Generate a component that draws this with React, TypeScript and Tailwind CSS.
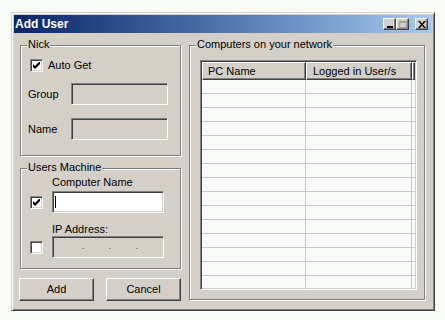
import React from "react";

const raised =
  "border border-t-white border-l-white border-r-[#404040] border-b-[#404040] shadow-[inset_-1px_-1px_0_#808080]";
const sunken =
  "border border-t-[#808080] border-l-[#808080] border-r-white border-b-white shadow-[inset_1px_1px_0_#404040,inset_-1px_-1px_0_#d4d0c8]";
const groupBox = "relative border border-[#808080] shadow-[inset_1px_1px_0_#fff,1px_1px_0_#fff]";

function CheckBox({ checked }: { checked?: boolean }) {
  return (
    <span className={`flex h-[13px] w-[13px] shrink-0 items-center justify-center bg-white ${sunken}`}>
      {checked && (
        <svg width="7" height="7" viewBox="0 0 7 7">
          <path d="M0 2 L0 5 L2 7 L7 2 L7 -1 L2 4 Z" fill="#000" />
        </svg>
      )}
    </span>
  );
}

function GroupLabel({ children }: { children: React.ReactNode }) {
  return (
    <span className="absolute -top-[8px] left-[6px] bg-[#d4d0c8] px-[1px] leading-[13px]">{children}</span>
  );
}

function TitleButton({ children, className = "" }: { children: React.ReactNode; className?: string }) {
  return (
    <div className={`flex h-[12px] w-[13px] items-center justify-center bg-[#d4d0c8] ${raised} ${className}`}>
      {children}
    </div>
  );
}

export default function App() {
  const rows = Array.from({ length: 15 });
  return (
    <div className="min-h-screen bg-[#f9fbf9] pl-[11px] pt-[12px] font-['Liberation_Sans',Arial,sans-serif] text-[11px] text-black">
      <div className="flex h-[299px] w-[424px] flex-col border border-t-[#d4d0c8] border-l-[#d4d0c8] border-r-[#404040] border-b-[#404040] bg-[#d4d0c8] p-[2px] shadow-[inset_1px_1px_0_#fff,inset_-1px_-1px_0_#808080]">
        {/* title bar */}
        <div className="flex h-[18px] items-center justify-between bg-linear-to-r from-[#0a246a] to-[#a6caf0] pl-[1px] pr-[4px]">
          <span className="text-[12px] font-bold leading-none text-white">Add User</span>
          <div className="flex items-center">
            <TitleButton>
              <span className="mt-[5px] h-[2px] w-[6px] bg-black" />
            </TitleButton>
            <TitleButton>
              <span className="h-[7px] w-[8px] border border-t-2 border-[#a0a0a0]" />
            </TitleButton>
            <TitleButton className="ml-[6px]">
              <svg width="8" height="7" viewBox="0 0 8 7">
                <path d="M0 0 L2 0 L4 2.5 L6 0 L8 0 L5 3.5 L8 7 L6 7 L4 4.5 L2 7 L0 7 L3 3.5 Z" fill="#000" />
              </svg>
            </TitleButton>
          </div>
        </div>

        {/* body */}
        <div className="flex pl-[5px] pt-[12px]">
          <div className="flex w-[162px] flex-col">
            <div className={`${groupBox} ml-[1px] h-[111px] w-[161px]`}>
              <GroupLabel>Nick</GroupLabel>
              <div className="flex flex-col pl-[7px] pt-[13px]">
                <label className="ml-[2px] flex h-[13px] items-center gap-[5px]">
                  <CheckBox checked />
                  <span className="leading-[13px]">Auto Get</span>
                </label>
                <div className="mt-[11px] flex h-[22px] items-center">
                  <span className="w-[43px]">Group</span>
                  <div className={`h-[22px] w-[97px] bg-[#d4d0c8] ${sunken}`} />
                </div>
                <div className="mt-[13px] flex h-[22px] items-center">
                  <span className="w-[43px]">Name</span>
                  <div className={`h-[22px] w-[97px] bg-[#d4d0c8] ${sunken}`} />
                </div>
              </div>
            </div>

            <div className={`${groupBox} ml-[1px] mt-[12px] h-[101px] w-[161px]`}>
              <GroupLabel>Users Machine</GroupLabel>
              <div className="grid grid-cols-[22px_112px] pl-[9px] pt-[7px]">
                <span />
                <span className="leading-[13px]">Computer Name</span>
                <div className="col-span-2 mt-[2px] flex h-[22px] items-center">
                  <span className="w-[22px]">
                    <CheckBox checked />
                  </span>
                  <div className={`flex h-[22px] w-[112px] items-center bg-white pl-[2px] ${sunken}`}>
                    <span className="h-[12px] w-[1px] bg-black" />
                  </div>
                </div>
                <span />
                <span className="mt-[10px] leading-[13px]">IP Address:</span>
                <div className="col-span-2 flex h-[22px] items-center">
                  <span className="w-[22px]">
                    <CheckBox />
                  </span>
                  <div className={`flex h-[22px] w-[112px] items-center bg-[#d4d0c8] pl-[29px] ${sunken}`}>
                    <span className="mt-[2px] h-[1px] w-[2px] bg-[#8a8a8a]" />
                    <span className="ml-[25px] mt-[2px] h-[1px] w-[2px] bg-[#8a8a8a]" />
                    <span className="ml-[25px] mt-[2px] h-[1px] w-[2px] bg-[#8a8a8a]" />
                  </div>
                </div>
              </div>
            </div>

            <div className="mt-[9px] flex">
              <button className={`flex h-[23px] w-[75px] items-center justify-center bg-[#d4d0c8] ${raised}`}>Add</button>
              <button className={`ml-[12px] flex h-[23px] w-[75px] items-center justify-center bg-[#d4d0c8] ${raised}`}>
                Cancel
              </button>
            </div>
          </div>

          <div className={`${groupBox} ml-[8px] h-[255px] w-[236px]`}>
            <GroupLabel>Computers on your network</GroupLabel>
            <div className={`ml-[10px] mt-[14px] flex h-[230px] w-[217px] flex-col overflow-hidden bg-[#f9fbf9] p-[1px] ${sunken}`}>
              <div className="flex h-[18px] shrink-0 bg-[#d4d0c8]">
                <div className={`flex w-[104px] items-center pl-[5px] ${raised}`}>PC Name</div>
                <div className={`flex w-[106px] items-center pl-[6px] ${raised}`}>Logged in User/s</div>
                <div className={`flex-1 ${raised}`} />
              </div>
              {rows.map((_, i) => (
                <div key={i} className="flex h-[14px] shrink-0 border-b border-[#c6c6c6]">
                  <div className="w-[104px] border-r border-[#c6c6c6]" />
                  <div className="w-[106px] border-r border-[#c6c6c6]" />
                </div>
              ))}
            </div>
          </div>
        </div>
      </div>
    </div>
  );
}
